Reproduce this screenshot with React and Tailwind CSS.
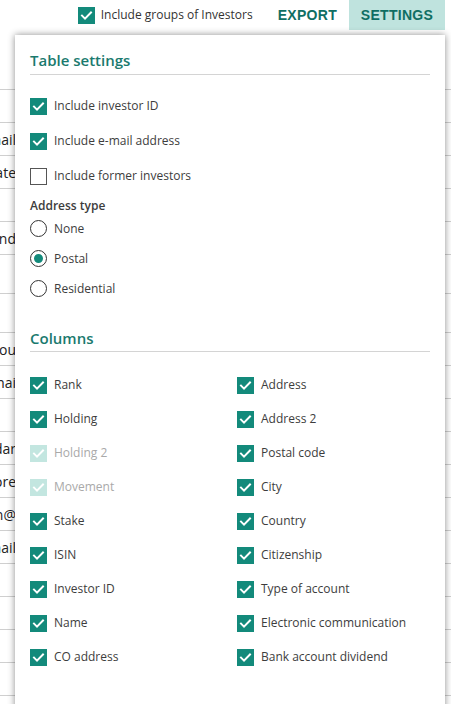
import React from "react";

const rowLines = [90, 123, 156, 189, 222, 255, 294, 333, 366, 399, 432, 465, 498, 531, 564, 597, 630, 663, 696, 729];

const rowText = {
  2: "E-mail",
  3: "Date",
  5: "Send",
  8: "You",
  9: "Emai",
  11: "Calendar",
  12: "More",
  13: "admin@",
  14: "E-mail",
};

const leftColumns = [
  { label: "Rank", checked: true },
  { label: "Holding", checked: true },
  { label: "Holding 2", checked: true, disabled: true },
  { label: "Movement", checked: true, disabled: true },
  { label: "Stake", checked: true },
  { label: "ISIN", checked: true },
  { label: "Investor ID", checked: true },
  { label: "Name", checked: true },
  { label: "CO address", checked: true },
];

const rightColumns = [
  "Address",
  "Address 2",
  "Postal code",
  "City",
  "Country",
  "Citizenship",
  "Type of account",
  "Electronic communication",
  "Bank account dividend",
];

const CheckBox = ({ checked, disabled }) => (
  <span
    className={
      "flex items-center justify-center w-[17px] h-[17px] shrink-0 " +
      (checked
        ? disabled
          ? "bg-[#c3e6e0]"
          : "bg-[#138a7b]"
        : "border-[1.5px] border-[#555] bg-white")
    }
  >
    {checked && (
      <svg width="13" height="13" viewBox="0 0 13 13" fill="none">
        <path d="M2 6.6 L5 9.6 L11 3.4" stroke="white" strokeWidth="2" strokeLinecap="square" />
      </svg>
    )}
  </span>
);

const CheckRow = ({ label, checked, disabled, className = "" }) => (
  <label className={"flex items-center gap-[7px] " + className}>
    <CheckBox checked={checked} disabled={disabled} />
    <span className={disabled ? "text-[#a9a9a9]" : "text-[#3d3d3d]"}>{label}</span>
  </label>
);

const Radio = ({ label, selected }) => (
  <label className="flex items-center gap-[7px] h-[30px]">
    <span className="flex items-center justify-center w-[17px] h-[17px] rounded-full border-[1.5px] border-[#333] shrink-0">
      {selected && <span className="w-[13px] h-[13px] rounded-full bg-[#138a7b] border-[2px] border-white" />}
    </span>
    <span className="text-[#3d3d3d]">{label}</span>
  </label>
);

const SectionTitle = ({ children }) => (
  <div className="border-b border-[#d4d4d4] pb-[2px] text-[15px] font-semibold text-[#1a7a6e]">{children}</div>
);

export default function App() {
  let prev = 30;
  return (
    <div className="relative w-[451px] h-[704px] overflow-hidden bg-white" style={{ fontFamily: "'Open Sans', 'Noto Sans', sans-serif" }}>
      <div className="flex items-center justify-end h-[30px] pr-[6px]">
        <label className="flex items-center gap-[6px] text-[12px] text-[#333] mr-[13px]">
          <CheckBox checked />
          Include groups of Investors
        </label>
        <button
          className="h-[30px] px-[12px] text-[14px] font-bold text-[#0f6e63] tracking-[0.3px]"
          style={{ fontFamily: "'Liberation Sans', Arial, sans-serif" }}
        >
          EXPORT
        </button>
        <button
          className="h-[30px] w-[96px] bg-[#bfe3de] text-[14px] font-bold text-[#0f6e63] tracking-[0.3px]"
          style={{ fontFamily: "'Liberation Sans', Arial, sans-serif" }}
        >
          SETTINGS
        </button>
      </div>

      {/* investor table behind the settings menu */}
      <div className="text-[14px] text-[#222]">
        {rowLines.map((y, i) => {
          const h = y - prev;
          prev = y;
          return (
            <div key={y} className="flex items-center border-b border-[#cfcfcf] whitespace-nowrap w-full" style={{ height: h }}>
              <div className="flex justify-end w-[16px] shrink-0">
                <span>{rowText[i] || ""}</span>
              </div>
            </div>
          );
        })}
      </div>

      <div className="absolute left-[15px] top-[35px] w-[430px] h-[720px] bg-white shadow-[0_0_7px_rgba(0,0,0,0.45)] px-[15px] pt-[14px] text-[12px]">
        <SectionTitle>Table settings</SectionTitle>
        <div className="pt-[14px]">
          <CheckRow label="Include investor ID" checked className="h-[35px]" />
          <CheckRow label="Include e-mail address" checked className="h-[35px]" />
          <CheckRow label="Include former investors" className="h-[35px]" />
        </div>
        <div className="mt-[3px] font-semibold text-[#3d3d3d]">Address type</div>
        <div className="-mt-[1px]">
          <Radio label="None" />
          <Radio label="Postal" selected />
          <Radio label="Residential" />
        </div>
        <div className="mt-[23px]">
          <SectionTitle>Columns</SectionTitle>
        </div>
        <div className="grid grid-cols-2 pt-[16px]">
          <div>
            {leftColumns.map((c) => (
              <CheckRow key={c.label} {...c} className="h-[34px]" />
            ))}
          </div>
          <div className="pl-[7px]">
            {rightColumns.map((c) => (
              <CheckRow key={c} label={c} checked className="h-[34px]" />
            ))}
          </div>
        </div>
      </div>
    </div>
  );
}
